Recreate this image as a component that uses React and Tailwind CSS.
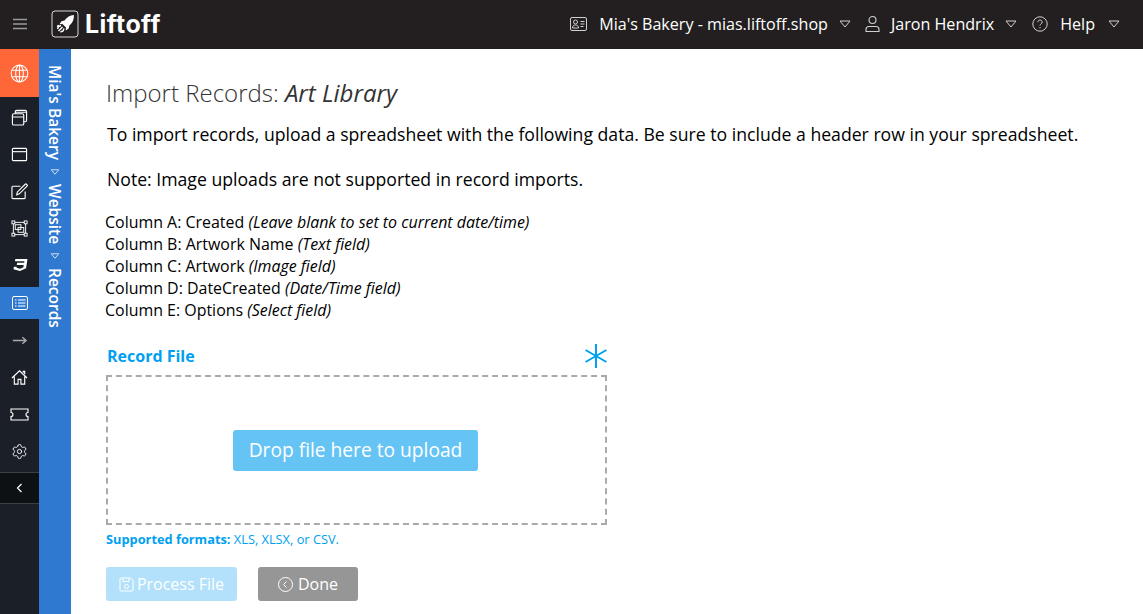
import React from "react";
import { Settings } from "lucide-react";

const Tri = ({ className = "" }) => (
  <svg width="12" height="8" viewBox="0 0 12 8" className={className} fill="none" stroke="currentColor" strokeWidth="1">
    <path d="M1 1h10L6 7z" />
  </svg>
);

const S = ({ children, w = 17, h = 17, vb = "0 0 18 18", sw = 1.2 }) => (
  <svg width={w} height={h} viewBox={vb} fill="none" stroke="currentColor" strokeWidth={sw}>
    {children}
  </svg>
);

const rail = [
  ["h-[38px]", <S key="a"><rect x="1.5" y="5" width="12" height="12" rx="1.5" /><path d="M1.5 8.5h12M4.5 5V3a1.5 1.5 0 0 1 1.5-1.5h9A1.5 1.5 0 0 1 16.500 3v9a1.500 1.500 0 0 1-1.500 1.500h-1.500M4.500 3.500h12" /></S>],
  ["h-[37px]", <S key="b"><rect x="1.500" y="2.500" width="15" height="13" rx="1" /><path d="M1.500 6h15" /></S>],
  ["h-[37px]", <S key="c"><path d="M15 9v6.500a1 1 0 0 1-1 1H2a1 1 0 0 1-1-1V4.500a1 1 0 0 1 1-1h8" /><path d="M6 12.500l.8-3L15 1.300a1 1 0 0 1 1.400 0l.6.6a1 1 0 0 1 0 1.400L8.800 11.500z" /></S>],
  ["h-[37px]", <S key="d" sw={1}><rect x="2.500" y="2.500" width="13" height="13" /><rect x="1" y="1" width="3" height="3" fill="#1b1f27" /><rect x="14" y="1" width="3" height="3" fill="#1b1f27" /><rect x="1" y="14" width="3" height="3" fill="#1b1f27" /><rect x="14" y="14" width="3" height="3" fill="#1b1f27" /><rect x="4.500" y="5" width="6" height="5" /><rect x="7.500" y="8" width="6" height="5" /></S>],
  ["h-[40px] pb-[4px]", <svg key="e" width="16" height="14" viewBox="0 0 16 15" fill="currentColor"><path d="M3 1h13l-1.500 10-6.500 3-7-2 .5-2.500h3l-.2 1 3.700 1 3.500-1.300.5-2.700H4.500l.5-2.500h7.500l.3-1.500H2.600z" /></svg>],
];

const rail2 = [
  ["text-[#aaaaaa]", <S key="f" sw={1.500}><path d="M2 9h14M12 5.500L16 9l-4 3.500" /></S>],
  ["text-white", <S key="g"><path d="M1 9.500L9 2l8 7.500M3.500 8v8h4v-5h3v5h4V8M13 4V2.500h1.500v3" /></S>],
  ["text-white", <svg key="h" width="19" height="13" viewBox="0 0 19 13" fill="none" stroke="currentColor" strokeWidth="1.100"><path d="M1 1h17v3.500a2 2 0 0 0 0 4V12H1V8.500a2 2 0 0 0 0-4z" /></svg>],
  ["text-[#f0f0f0]", <Settings key="i" size={17} strokeWidth={1.400} />],
];

const columns = [
  ["Column A: Created ", "(Leave blank to set to current date/time)"],
  ["Column B: Artwork Name ", "(Text field)"],
  ["Column C: Artwork ", "(Image field)"],
  ["Column D: DateCreated ", "(Date/Time field)"],
  ["Column E: Options ", "(Select field)"],
];

export default function App() {
  return (
    <div className="flex h-[614px] w-[1143px] flex-col overflow-hidden bg-white font-['Open_Sans',sans-serif] text-black">
      <header className="flex h-[49px] shrink-0 items-center bg-[#231f20] pb-[1px] text-white">
        <div className="flex w-[39px] justify-center text-[#9b9b9b]">
          <svg width="14" height="12" viewBox="0 0 14 12" stroke="currentColor" strokeWidth="1.500"><path d="M0 1.500h14M0 6h14M0 10.500h14" /></svg>
        </div>
        <div className="ml-[12px] flex items-center gap-[6px]">
          <svg width="28" height="28" viewBox="0 0 28 28" fill="none">
            <rect x="1" y="1" width="26" height="26" rx="3" stroke="#d8d8d8" strokeWidth="1" />
            <path d="M23 5c-4 .3-7 2-9.500 5.500l-3 .7-2 3 3-.3 3.500 3.500-.3 3 3-2 .7-3c3-2.500 4.600-5.400 4.600-10.400z" fill="#fff" />
            <path d="M10 15.500l-2.500 1-1 2.500M11.500 17l-4 4M13 18.500l-1 2.500-2.500 1M8 15.500l-2 1" stroke="#fff" strokeWidth="1.400" />
          </svg>
          <span className="font-['Inter',sans-serif] text-[25px] font-bold leading-none tracking-[0.4px] text-white">Liftoff</span>
        </div>
        <div className="ml-auto flex items-center pr-[23px] text-[16.100px]">
          <svg width="17" height="14" viewBox="0 0 17 14" fill="none" stroke="#d0d0d0" strokeWidth="1"><rect x=".5" y=".5" width="16" height="13" rx="1.500" /><circle cx="5.500" cy="5" r="2" /><path d="M2.500 11c0-2 1-3 3-3s3 1 3 3zM10.500 4.500h4M10.500 7h4M10.500 9.500h3" /></svg>
          <span className="ml-[12px]">Mia's Bakery - mias.liftoff.shop</span>
          <Tri className="ml-[11px] text-[#d0d0d0]" />
          <svg className="ml-[14px]" width="15" height="18" viewBox="0 0 15 18" fill="none" stroke="#d0d0d0" strokeWidth="1.100"><circle cx="7.500" cy="5" r="3.500" /><path d="M1 16.500v-2c0-2 1.500-3 3-3h7c1.500 0 3 1 3 3v2z" /></svg>
          <span className="ml-[11px]">Jaron Hendrix</span>
          <Tri className="ml-[11px] text-[#d0d0d0]" />
          <svg className="ml-[15px]" width="16" height="16" viewBox="0 0 16 16" fill="none" stroke="#d0d0d0" strokeWidth="1"><circle cx="8" cy="8" r="7.200" /><path d="M5.800 6.200c0-1.300 1-2.200 2.200-2.200s2.200.8 2.200 2c0 1.800-2.200 1.800-2.200 3.500M8 11v1.300" /></svg>
          <span className="ml-[12px]">Help</span>
          <Tri className="ml-[13px] text-[#d0d0d0]" />
        </div>
      </header>

      <div className="flex min-h-0 flex-1">
        <nav className="flex w-[39px] shrink-0 flex-col bg-[#1b1f27] text-white">
          <div className="flex h-[48px] items-center justify-center bg-[#ff6638]">
            <svg width="19" height="19" viewBox="0 0 20 20" fill="none" stroke="#fff" strokeWidth="1.100"><circle cx="10" cy="10" r="8.800" /><ellipse cx="10" cy="10" rx="4" ry="8.800" /><path d="M2 6.500h16M2 13.500h16M10 1v18" /></svg>
          </div>
          <div className="pt-[1px]">
            {rail.map(([h, icon], i) => (
              <div key={i} className={`flex items-center justify-center ${h}`}>{icon}</div>
            ))}
          </div>
          <div className="flex h-[32px] items-center justify-center bg-[#3079d0]">
            <svg width="16" height="14" viewBox="0 0 16 14" fill="none" stroke="#fff" strokeWidth="1"><rect x=".5" y=".5" width="15" height="13" rx="1.500" /><path d="M3 4h1.500M3 7h1.500M3 10h1.500M6 4h7.500M6 7h7.500M6 10h7.500" strokeWidth="1.500" stroke="#b9d6f5" /></svg>
          </div>
          <div className="pt-[3px]">
            {rail2.map(([c, icon], i) => (
              <div key={i} className={`flex h-[37px] items-center justify-center ${c}`}>{icon}</div>
            ))}
          </div>
          <div className="mt-[2px] flex h-[32px] items-center justify-center border-y border-[#3b3e43] bg-[#0e1114] text-white">
            <svg width="7" height="10" viewBox="0 0 7 10" fill="none" stroke="currentColor" strokeWidth="1.200"><path d="M5.500 1L1.500 5l4 4" /></svg>
          </div>
        </nav>

        <div className="flex w-[32px] shrink-0 justify-center bg-[#3079d0] pt-[16px]">
          <div className="flex items-center gap-[8px] text-[15.500px] font-semibold leading-[20px] text-white [writing-mode:vertical-rl]">
            <span>Mia's Bakery</span>
            <Tri className="scale-75" />
            <span>Website</span>
            <Tri className="scale-75" />
            <span>Records</span>
          </div>
        </div>

        <main className="min-w-0 flex-1 pl-[35px]">
          <h1 className="mt-[27px] text-[24px] font-light leading-[34px] text-[#333333]">
            Import Records: <em className="font-normal">Art Library</em>
          </h1>
          <p className="mt-[13px] ml-[1px] text-[17.650px] leading-[22px]">To import records, upload a spreadsheet with the following data. Be sure to include a header row in your spreadsheet.</p>
          <p className="mt-[23px] ml-[1px] text-[17.650px] leading-[22px]">Note: Image uploads are not supported in record imports.</p>
          <ul className="mt-[21px] -ml-[1px] text-[15.950px] leading-[22px]">
            {columns.map(([a, b]) => (
              <li key={a}>{a}<em>{b}</em></li>
            ))}
          </ul>
          <div className="mt-[21px] flex h-[33px] w-[500px] items-center justify-between pb-[5px]">
            <span className="ml-[1px] text-[16px] font-bold text-[#00a0f0]">Record File</span>
            <svg className="-mr-[2px]" width="24" height="26" viewBox="0 0 24 26" stroke="#00a0f0" strokeWidth="2" fill="none"><path d="M12 1v24M1.500 7l21 12M22.500 7l-21 12" /></svg>
          </div>
          <div className="flex h-[150px] w-[501px] items-center justify-center border-2 border-dashed border-[#aaaaaa] pr-[2px]">
            <div className="flex h-[41px] w-[245px] items-center justify-center rounded-[3px] bg-[#66c4f5] pt-[1px] text-[19.200px] font-medium text-white">Drop file here to upload</div>
          </div>
          <p className="mt-[5px] text-[12.800px] leading-[18px] text-[#00a0f0]"><b>Supported formats:</b> XLS, XLSX, or CSV.</p>
          <div className="mt-[19px] flex gap-[21px]">
            <div className="flex h-[34px] w-[131px] items-center justify-center gap-[3px] rounded-[3px] bg-[#b3e1fb] text-[16px] font-medium text-white">
              <svg width="15" height="15" viewBox="0 0 15 15" fill="none" stroke="#fff" strokeWidth="1"><path d="M1 2a1 1 0 0 1 1-1h9.500L14 3.500V13a1 1 0 0 1-1 1H2a1 1 0 0 1-1-1z" /><path d="M4 1v3.500h6V1" /><circle cx="7.500" cy="9.500" r="2" /></svg>
              <span>Process File</span>
            </div>
            <div className="flex h-[34px] w-[100px] items-center justify-center gap-[5px] rounded-[3px] bg-[#969696] text-[16px] font-medium text-white">
              <svg width="15" height="15" viewBox="0 0 15 15" fill="none" stroke="#fff" strokeWidth="1"><circle cx="7.500" cy="7.500" r="7" /><path d="M8.500 4.500l-3 3 3 3" /></svg>
              <span>Done</span>
            </div>
          </div>
        </main>
      </div>
    </div>
  );
}
